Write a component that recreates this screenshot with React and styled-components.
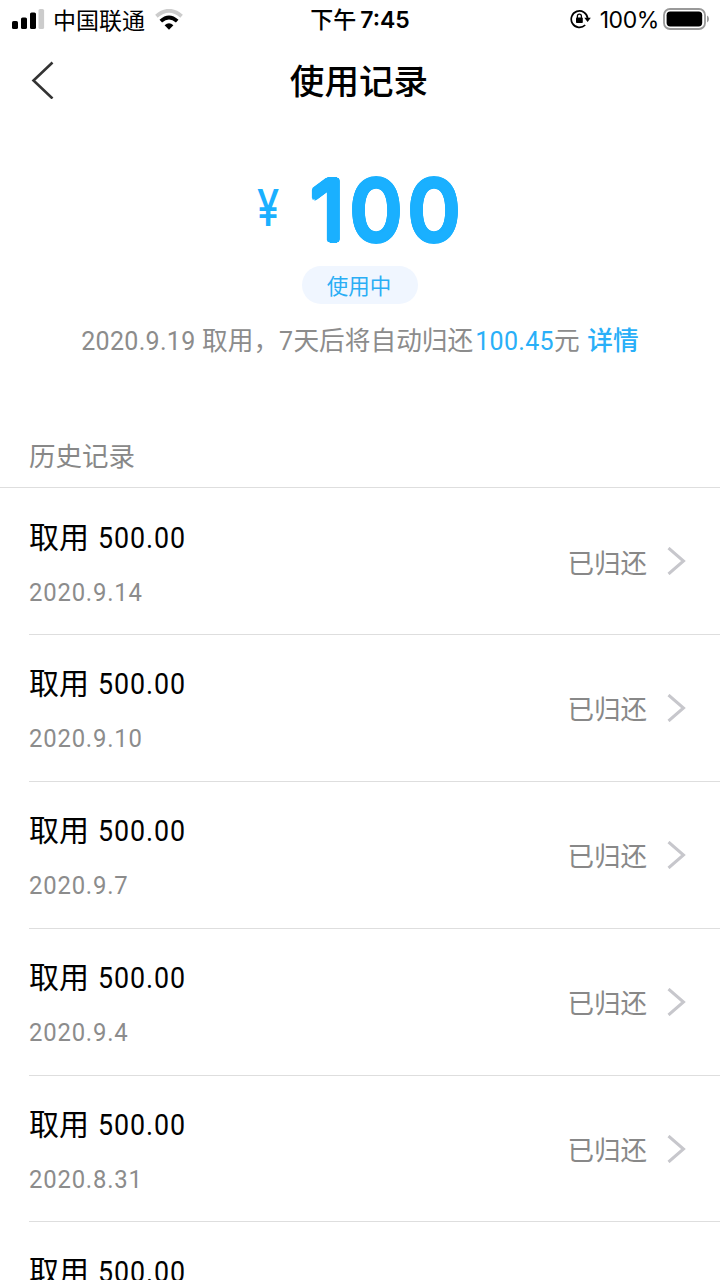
import styled, { createGlobalStyle } from "styled-components";

const records = [
  { id: 1, amount: "500.00", date: "2020.9.14" },
  { id: 2, amount: "500.00", date: "2020.9.10" },
  { id: 3, amount: "500.00", date: "2020.9.7" },
  { id: 4, amount: "500.00", date: "2020.9.4" },
  { id: 5, amount: "500.00", date: "2020.8.31" },
  { id: 6, amount: "500.00", date: "2020.8.28" },
];

// ring of solid shadows, thickens the strokes and rounds their ends
const rounded = (r) =>
  Array.from({ length: 16 }, (_, index) => {
    const a = (index * Math.PI) / 8;
    return `${(Math.cos(a) * r).toFixed(2)}px ${(Math.sin(a) * r).toFixed(2)}px 0 #1ab0ff`;
  }).join(", ");

const SignalIcon = () => (
  <svg width="33" height="21" viewBox="0 0 33 21">
    <rect x="0" y="12" width="6" height="8" rx="1.6" />
    <rect x="9" y="8.5" width="6" height="11.5" rx="1.6" />
    <rect x="18" y="3.5" width="6" height="16.5" rx="1.6" />
    <rect x="26.5" y="0" width="5.6" height="20" rx="1.6" fill="#ccc" />
  </svg>
);

const WifiIcon = () => (
  <svg width="28" height="21" viewBox="0 0 28 21" fill="none">
    <path d="M1.4 7.2Q14 -3.6 26.6 7.2" stroke="#ccc" strokeWidth="3.8" />
    <path d="M5.8 12.2Q14 4.8 22.2 12.2" stroke="#000" strokeWidth="3.8" />
    <path d="M9.6 16.2Q14 12.2 18.4 16.2L14 20.8Z" fill="#000" />
  </svg>
);

const LockIcon = () => (
  <svg width="22" height="20" viewBox="0 0 22 20" fill="none">
    <path d="M15.2 16A8.2 8.2 0 1 1 17.6 9.2" stroke="#000" strokeWidth="1.7" />
    <path d="M14.3 8.8H20.8L17.6 13Z" fill="#000" />
    <rect x="6" y="8.6" width="6.8" height="5.4" rx="0.8" fill="#000" />
    <path d="M7.4 9V7.2a2 2 0 0 1 4 0V9" stroke="#000" strokeWidth="1.3" />
  </svg>
);

const BatteryIcon = () => (
  <svg width="46" height="22" viewBox="0 0 46 22" fill="none">
    <rect x="1" y="1" width="41" height="20" rx="6" stroke="#999" strokeWidth="1.8" />
    <rect x="3.6" y="3.6" width="35.6" height="14.8" rx="3.6" fill="#000" />
    <path d="M44 7.6Q46 8.5 46 11T44 14.4Z" fill="#999" />
  </svg>
);

const App = () => {
  return (
    <Screen>
      <GlobalStyle />
      <StatusBar>
        <Carrier>
          <SignalIcon />
          <span>中国联通</span>
          <WifiIcon />
        </Carrier>
        <Clock>
          下午<b>7:45</b>
        </Clock>
        <Power>
          <LockIcon />
          <span>100%</span>
          <BatteryIcon />
        </Power>
      </StatusBar>
      <Header>
        <BackButton aria-label="返回">
          <svg width="24" height="38" viewBox="0 0 24 38" fill="none">
            <path d="M22.5 1.5L3.5 19.5L22.5 37.5" stroke="#333" strokeWidth="2.6" />
          </svg>
        </BackButton>
        <Title>使用记录</Title>
      </Header>
      <Summary>
        <Total>
          <Currency>¥</Currency>
          <Figure>100</Figure>
        </Total>
        <Badge>使用中</Badge>
        <Notice>
          <Num>2020.9.19 </Num>取用，<Num>7</Num>天后将自动归还
          <Blue>
            <Num>100.45</Num>
          </Blue>
          元 <Blue $strong>详情</Blue>
        </Notice>
      </Summary>
      <SectionTitle>历史记录</SectionTitle>
      <List>
        {records.map((e) => (
          <Row key={e.id}>
            <div>
              <Label>
                取用<Amount>{e.amount}</Amount>
              </Label>
              <DateText>{e.date}</DateText>
            </div>
            <Status>
              <span>已归还</span>
              <svg width="19" height="28" viewBox="0 0 19 28" fill="none">
                <path d="M1.5 1L16.5 14L1.5 27" stroke="#c7c7cc" strokeWidth="3" />
              </svg>
            </Status>
          </Row>
        ))}
      </List>
    </Screen>
  );
};

export default App;

const GlobalStyle = createGlobalStyle`
  * {
    box-sizing: border-box;
  }
  body {
    margin: 0;
    background: #fff;
    overflow: hidden;
  }
`;

const Screen = styled.main`
  height: 1280px;
  overflow: hidden;
  background: #fff;
  color: #000;
  font-family: "Noto Sans CJK SC", sans-serif;
`;

const StatusBar = styled.div`
  display: grid;
  grid-template-columns: 1fr auto 1fr;
  align-items: center;
  height: 38px;
  padding: 0 11px 0 12px;
  font-size: 23px;
  line-height: 36px;
`;

const Carrier = styled.div`
  display: flex;
  align-items: center;
  gap: 9px;
  span {
    margin: -1px 1px 0 -1px;
  }
`;

const Clock = styled.div`
  margin-left: -1px;
  font-weight: 500;
  b {
    margin-left: 4px;
    font-family: Inter, sans-serif;
    font-weight: 600;
    font-size: 23px;
  }
`;

const Power = styled.div`
  display: flex;
  align-items: center;
  justify-content: flex-end;
  span {
    margin: 2px 4px 0 8px;
    font-family: Inter, sans-serif;
    letter-spacing: -0.4px;
  }
`;

const Header = styled.header`
  display: grid;
  grid-template-columns: 60px 1fr 60px;
  align-items: center;
  height: 84px;
  padding: 0 30px;
`;

const BackButton = styled.button`
  display: flex;
  padding: 0;
  border: 0;
  background: none;
`;

const Title = styled.h1`
  margin: 0 0 0 -2px;
  text-align: center;
  font-size: 34.6px;
  font-weight: 500;
  line-height: 78px;
  padding-bottom: 2px;
`;

const Summary = styled.section`
  display: flex;
  flex-direction: column;
  align-items: center;
  height: 308px;
  padding-top: 37px;
`;

const Total = styled.div`
  display: flex;
  align-items: center;
  gap: 28px;
  height: 107px;
  padding-bottom: 6px;
  color: #1ab0ff;
  font-family: Inter, sans-serif;
`;

const Currency = styled.span`
  padding-bottom: 4px;
  font-size: 51px;
  font-weight: 500;
  line-height: 90px;
  transform: scaleX(0.78);
`;

const Figure = styled.span`
  font-size: 83px;
  font-weight: 400;
  line-height: 98px;
  letter-spacing: 5.5px;
  text-shadow: ${rounded(2.6)};
`;

const Badge = styled.span`
  width: 116px;
  height: 38px;
  border-radius: 19px;
  background: #f0f6ff;
  color: #2aaef5;
  text-align: center;
  font-size: 21.5px;
  line-height: 38px;
  padding-right: 2px;
`;

const Notice = styled.p`
  margin: 15px 0 0;
  color: #8c8c8c;
  font-size: 25.7px;
  line-height: 40px;
  white-space: nowrap;
`;

const Num = styled.span`
  font-family: Roboto, sans-serif;
  font-size: 25px;
  font-weight: 400;
  letter-spacing: 0.3px;
`;

const Blue = styled.span`
  margin-left: 2px;
  color: #29aff8;
  font-weight: ${(props) => (props.$strong ? 500 : 400)};
`;

const SectionTitle = styled.h2`
  height: 58px;
  margin: 0;
  padding-left: 29px;
  border-bottom: 1px solid #dedede;
  color: #888;
  font-size: 26.5px;
  font-weight: 400;
  line-height: 50px;
`;

const List = styled.ul`
  margin: 0;
  padding: 0 0 0 29px;
  list-style: none;
`;

const Row = styled.li`
  display: flex;
  justify-content: space-between;
  height: 146.9px;
  padding: 25.5px 34px 0 0;
  border-bottom: 1px solid #dedede;
`;

const Label = styled.div`
  font-size: 30px;
  line-height: 42px;
`;

const Amount = styled.span`
  display: inline-block;
  margin-left: 9px;
  font-family: Roboto, sans-serif;
  font-size: 29.5px;
  letter-spacing: 1px;
  transform: scaleX(0.91);
  transform-origin: left;
`;

const DateText = styled.div`
  margin-top: 12px;
  color: #8c8c8c;
  font-family: Roboto, sans-serif;
  font-size: 26.5px;
  font-weight: 400;
  line-height: 42px;
  letter-spacing: 0.9px;
  transform: scaleX(0.9);
  transform-origin: left;
`;

const Status = styled.div`
  display: flex;
  align-items: center;
  gap: 20px;
  height: 95px;
  color: #888;
  font-size: 26.5px;
`;
